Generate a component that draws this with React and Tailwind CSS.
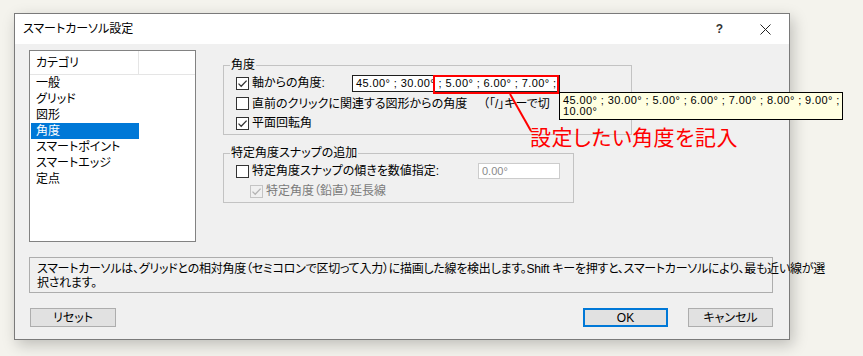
const categories = ["一般", "グリッド", "図形", "角度", "スマートポイント", "スマートエッジ", "定点"];

const CheckBox = ({ checked, disabled }) => (
  <span
    className={`flex h-[13px] w-[13px] shrink-0 items-center justify-center border ${
      disabled ? "border-[#c4c4c4] bg-[#f0f0f0]" : "border-[#333333] bg-white"
    }`}
  >
    {checked && (
      <svg width="11" height="11" viewBox="0 0 11 11">
        <path
          d="M1.5 5.6 L4.2 8.3 L9.6 2.6"
          fill="none"
          stroke={disabled ? "#b4b4b4" : "#333333"}
          strokeWidth="1.3"
        />
      </svg>
    )}
  </span>
);

const App = () => {
  return (
    <div className="h-[356px] w-[863px] overflow-hidden bg-[#f4f3ed] pl-[14px] pt-[13px] font-['Liberation_Sans','Noto_Sans_CJK_JP',sans-serif] text-[12px] text-black [font-feature-settings:'palt']">
      <div className="relative w-[776px] border border-[#7a7a7a] bg-[#f0f0f0] shadow-[3px_5px_14px_rgba(0,0,0,0.22)]">
        {/* title bar */}
        <div className="flex h-[30px] items-center bg-white pl-[8px] pr-[18px]">
          <span className="text-[12px]">スマートカーソル設定</span>
          <span className="ml-auto text-[12px] font-bold text-[#333333]">?</span>
          <svg className="ml-[37px]" width="11" height="11" viewBox="0 0 11 11">
            <path d="M0.5 0.5 L10.5 10.5 M10.5 0.5 L0.5 10.5" stroke="#222222" strokeWidth="1" />
          </svg>
        </div>

        <div className="pb-[12px] pl-[14px] pr-[16px] pt-[6px]">
          <div className="flex">
            {/* category list */}
            <div className="h-[192px] w-[167px] shrink-0 border border-[#828282] bg-white">
              <div className="flex h-[24px] border-b border-[#e5e5e5]">
                <div className="flex w-[109px] items-center border-r border-[#e5e5e5] pl-[6px]">
                  カテゴリ
                </div>
              </div>
              <div className="pl-[1px]">
                {categories.map((c) => (
                  <div
                    key={c}
                    className={`flex h-[16px] w-[108px] items-center pl-[5px] leading-[16px] ${
                      c === "角度" ? "bg-[#0078d7] text-white" : ""
                    }`}
                  >
                    {c}
                  </div>
                ))}
              </div>
            </div>

            {/* right column */}
            <div className="ml-[27px] pt-[8px]">
              <fieldset className="w-[409px] border border-[#c3c3c3] px-[6px] pb-[2px]">
                <legend className="px-[1px] leading-[14px]">角度</legend>
                <div className="flex h-[21px] items-center pl-[6px] pt-[1px]">
                  <div className="flex w-[116px] items-center gap-[3px]">
                    <CheckBox checked />
                    <span>軸からの角度:</span>
                  </div>
                  <div className="flex h-[17px] w-[208px] items-center whitespace-nowrap border border-[#1e1e1e] bg-white pl-[3px] text-[11px] tracking-[0.4px]">
                    45.00° ; 30.00° ; 5.00° ; 6.00° ; 7.00° ;
                  </div>
                </div>
                <div className="flex h-[21px] items-center pl-[6px]">
                  <div className="flex w-[247px] items-center gap-[3px]">
                    <CheckBox />
                    <span className="whitespace-nowrap">直前のクリックに関連する図形からの角度</span>
                  </div>
                  {/* the hint runs under the tooltip, only its start shows */}
                  <span className="w-[74px] overflow-hidden whitespace-nowrap">（「/」キーで切</span>
                </div>
                <div className="flex h-[18px] items-center gap-[3px] pl-[6px]">
                  <CheckBox checked />
                  <span>平面回転角</span>
                </div>
              </fieldset>

              <fieldset className="mt-[11px] w-[351px] border border-[#c3c3c3] px-[6px] pb-[2px]">
                <legend className="px-[1px] leading-[14px]">特定角度スナップの追加</legend>
                <div className="flex h-[22px] items-center pl-[6px]">
                  <div className="flex w-[242px] items-center gap-[3px]">
                    <CheckBox />
                    <span className="whitespace-nowrap">特定角度スナップの傾きを数値指定:</span>
                  </div>
                  <div className="flex h-[16px] w-[82px] items-center border border-[#cccccc] bg-white pl-[3px] text-[11px] text-[#8a8a8a]">
                    0.00°
                  </div>
                </div>
                <div className="flex h-[18px] items-center gap-[3px] pl-[20px] text-[#7a7a7a]">
                  <CheckBox checked disabled />
                  <span>特定角度（鉛直）延長線</span>
                </div>
              </fieldset>
            </div>
          </div>

          {/* description */}
          <div className="mt-[15px] h-[36px] w-[744px] border border-[#adadad] pl-[7px] pt-[4px] leading-[14px] tracking-[-0.25px]">
            <div className="whitespace-nowrap">
              スマートカーソルは、グリッドとの相対角度（セミコロンで区切って入力）に描画した線を検出します。Shift キーを押すと、スマートカーソルにより、最も近い線が選
            </div>
            <div>択されます。</div>
          </div>

          {/* buttons */}
          <div className="mt-[15px] flex">
            <button className="ml-[1px] flex h-[19px] w-[86px] items-center justify-center border border-[#adadad] bg-[#e1e1e1]">
              リセット
            </button>
            <button className="ml-auto flex h-[19px] w-[85px] items-center justify-center border-2 border-[#0078d7] bg-[#e1e1e1]">
              OK
            </button>
            <button className="ml-[20px] flex h-[19px] w-[85px] items-center justify-center border border-[#adadad] bg-[#e1e1e1]">
              キャンセル
            </button>
          </div>
        </div>

        {/* annotations */}
        <div className="absolute left-[418px] top-[61px] h-[19px] w-[126px] border-2 border-[#ff0000]" />
        <svg className="absolute left-[490px] top-[76px]" width="40" height="50" viewBox="0 0 40 50">
          <line x1="5" y1="4" x2="26" y2="41" stroke="#ff0000" strokeWidth="2" />
        </svg>
        <div className="absolute left-[544px] top-[78px] h-[28px] w-[284px] whitespace-nowrap border border-black bg-[#ffffe1] pl-[3px] pt-[2px] text-[11px] leading-[11px] tracking-[0.4px]">
          <div>45.00° ; 30.00° ; 5.00° ; 6.00° ; 7.00° ; 8.00° ; 9.00° ;</div>
          <div>10.00°</div>
        </div>
        <div className="absolute left-[515px] top-[112px] whitespace-nowrap text-[21px] leading-[24px] tracking-[0.5px] text-[#ff0000]">
          設定したい角度を記入
        </div>
      </div>
    </div>
  );
};

export default App;
